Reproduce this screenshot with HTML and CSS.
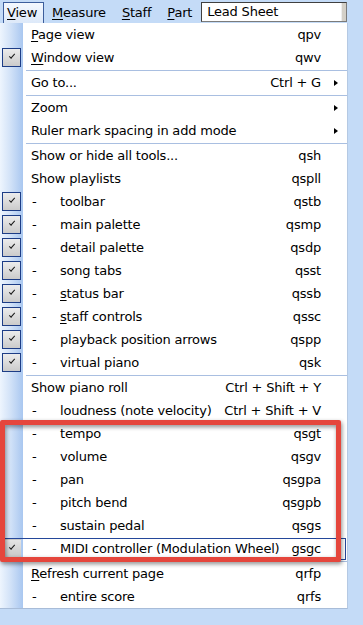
FILE: index.html
```html
<!DOCTYPE html>
<html>
<head>
<meta charset="utf-8">
<link rel="stylesheet" href="styles.css">
</head>
<body>
<div class="menubar">
  <span class="mb-item active"><u>V</u>iew</span>
  <span class="mb-item"><u>M</u>easure</span>
  <span class="mb-item"><u>S</u>taff</span>
  <span class="mb-item"><u>P</u>art</span>
  <div class="combo"><span class="combo-text">Lead Sheet</span><span class="combo-btn"></span></div>
</div>
<div class="menu">
  <div class="item"><span class="g"></span><span class="label"><u>P</u>age view</span><span class="key">qpv</span><span class="arr"></span></div>
  <div class="item"><span class="g"><span class="chk"></span></span><span class="label"><u>W</u>indow view</span><span class="key">qwv</span><span class="arr"></span></div>
  <div class="sep"></div>
  <div class="item"><span class="g"></span><span class="label">Go to...</span><span class="key">Ctrl + G</span><span class="arr"><i class="tri"></i></span></div>
  <div class="sep"></div>
  <div class="item"><span class="g"></span><span class="label">Zoom</span><span class="key"></span><span class="arr"><i class="tri"></i></span></div>
  <div class="item"><span class="g"></span><span class="label">Ruler mark spacing in add mode</span><span class="key"></span><span class="arr"><i class="tri"></i></span></div>
  <div class="sep"></div>
  <div class="item"><span class="g"></span><span class="label">Show or hide all tools...</span><span class="key">qsh</span><span class="arr"></span></div>
  <div class="item"><span class="g"></span><span class="label">Show playlists</span><span class="key">qspll</span><span class="arr"></span></div>
  <div class="item"><span class="g"><span class="chk"></span></span><span class="label"><span class="dash">-</span>toolbar</span><span class="key">qstb</span><span class="arr"></span></div>
  <div class="item"><span class="g"><span class="chk"></span></span><span class="label"><span class="dash">-</span>main palette</span><span class="key">qsmp</span><span class="arr"></span></div>
  <div class="item"><span class="g"><span class="chk"></span></span><span class="label"><span class="dash">-</span>detail palette</span><span class="key">qsdp</span><span class="arr"></span></div>
  <div class="item"><span class="g"><span class="chk"></span></span><span class="label"><span class="dash">-</span>song tabs</span><span class="key">qsst</span><span class="arr"></span></div>
  <div class="item"><span class="g"><span class="chk"></span></span><span class="label"><span class="dash">-</span><u>s</u>tatus bar</span><span class="key">qssb</span><span class="arr"></span></div>
  <div class="item"><span class="g"><span class="chk"></span></span><span class="label"><span class="dash">-</span><u>s</u>taff controls</span><span class="key">qssc</span><span class="arr"></span></div>
  <div class="item"><span class="g"><span class="chk"></span></span><span class="label"><span class="dash">-</span>playback position arrows</span><span class="key">qspp</span><span class="arr"></span></div>
  <div class="item"><span class="g"><span class="chk"></span></span><span class="label"><span class="dash">-</span>virtual piano</span><span class="key">qsk</span><span class="arr"></span></div>
  <div class="sep"></div>
  <div class="item"><span class="g"></span><span class="label">Show piano roll</span><span class="key">Ctrl + Shift + Y</span><span class="arr"></span></div>
  <div class="item"><span class="g"></span><span class="label"><span class="dash">-</span>loudness (note velocity)</span><span class="key">Ctrl + Shift + V</span><span class="arr"></span></div>
  <div class="item"><span class="g"></span><span class="label"><span class="dash">-</span>tempo</span><span class="key">qsgt</span><span class="arr"></span></div>
  <div class="item"><span class="g"></span><span class="label"><span class="dash">-</span>volume</span><span class="key">qsgv</span><span class="arr"></span></div>
  <div class="item"><span class="g"></span><span class="label"><span class="dash">-</span>pan</span><span class="key">qsgpa</span><span class="arr"></span></div>
  <div class="item"><span class="g"></span><span class="label"><span class="dash">-</span>pitch bend</span><span class="key">qsgpb</span><span class="arr"></span></div>
  <div class="item"><span class="g"></span><span class="label"><span class="dash">-</span>sustain pedal</span><span class="key">qsgs</span><span class="arr"></span></div>
  <div class="item hot"><span class="g"><span class="chk plain"></span></span><span class="label"><span class="dash">-</span>MIDI controller (Modulation Wheel)</span><span class="key">gsgc</span><span class="arr"></span></div>
  <div class="sep"></div>
  <div class="item"><span class="g"></span><span class="label"><u>R</u>efresh current page</span><span class="key">qrfp</span><span class="arr"></span></div>
  <div class="item"><span class="g"></span><span class="label"><span class="dash">-</span>entire score</span><span class="key">qrfs</span><span class="arr"></span></div>
  <div class="highlight-box"></div>
</div>
</body>
</html>
```

FILE: styles.css
```css
html, body {
  margin: 0;
  padding: 0;
}
body {
  background: #c4dbf7;
  font-family: "DejaVu Sans", sans-serif;
  font-size: 13px;
  letter-spacing: -0.2px;
  color: #000;
  width: 363px;
  height: 625px;
  overflow: hidden;
}
u {
  text-decoration: underline;
  text-underline-offset: 2px;
}
.menubar {
  height: 23px;
  display: flex;
  align-items: flex-start;
  padding-top: 2px;
  padding-left: 3px;
  box-sizing: border-box;
}
.mb-item {
  height: 20px;
  line-height: 20px;
  padding: 0 7px;
  border: 1px solid transparent;
  border-bottom: 0;
  box-sizing: border-box;
}
.mb-item.active {
  padding: 0 0 0 3px;
  border-color: #3d5e9c;
  background: linear-gradient(#f4f8fe, #dde9f9);
  height: 21px;
  width: 41px;
}
.combo {
  margin-left: 1px;
  width: 146px;
  height: 20px;
  box-sizing: border-box;
  border: 1px solid #7b7b7b;
  border-top-color: #404040;
  border-left-color: #404040;
  background: #fff;
  display: flex;
  flex-shrink: 0;
}
.combo-text {
  flex: 1;
  line-height: 18px;
  padding-left: 5px;
}
.combo-btn {
  width: 4px;
  background: #d4d0c8;
  border-left: 1px solid #eeeeee;
}
.menu {
  position: relative;
  width: 348px;
  box-sizing: border-box;
  border-right: 1px solid #b5c9e3;
  border-bottom: 1px solid #a8bcd8;
  background: linear-gradient(to right, #eef5fe 0px, #d3e3f8 10px, #a9c7f0 23px, #ffffff 23px);
}
.item {
  position: relative;
  display: grid;
  grid-template-columns: 23px 1fr auto 26px;
  height: 23px;
  align-items: center;
}
.g {
  height: 23px;
  position: relative;
}
.chk {
  position: absolute;
  left: 2px;
  top: 2px;
  width: 19px;
  height: 19px;
  box-sizing: border-box;
  border: 1px solid #1d3d86;
  background: linear-gradient(#ececec, #cbcbcb);
}
.chk::after {
  content: "";
  position: absolute;
  left: 6px;
  top: 5px;
  width: 5px;
  height: 2px;
  border-left: 1.6px solid #1a1a1a;
  border-bottom: 1.6px solid #1a1a1a;
  transform: rotate(-48deg);
}
.chk.plain {
  border-color: transparent;
  background: linear-gradient(#e4e4e4, #c8c8c8);
}
.label {
  padding-left: 8px;
  white-space: nowrap;
}
.dash {
  display: inline-block;
  width: 29px;
  padding-left: 1px;
  box-sizing: border-box;
}
.key {
  text-align: right;
  white-space: nowrap;
}
.arr {
  height: 23px;
  display: flex;
  align-items: center;
}
.tri {
  margin-left: 13px;
  width: 0;
  height: 0;
  border-left: 4px solid #000;
  border-top: 3.5px solid transparent;
  border-bottom: 3.5px solid transparent;
}
.hot::after {
  content: "";
  position: absolute;
  left: 2px;
  right: 1px;
  top: 1px;
  bottom: 0;
  border: 1px solid #24479a;
  pointer-events: none;
}
.sep {
  height: 1px;
  margin: 1px 0 0 26px;
  background: #a9bfe1;
}
.highlight-box {
  position: absolute;
  left: 0;
  top: 397px;
  width: 341px;
  height: 142px;
  box-sizing: border-box;
  border: 5px solid #e5463c;
  border-radius: 2px;
  filter: drop-shadow(1px 2px 2px rgba(0, 0, 0, 0.45));
  pointer-events: none;
}
```
